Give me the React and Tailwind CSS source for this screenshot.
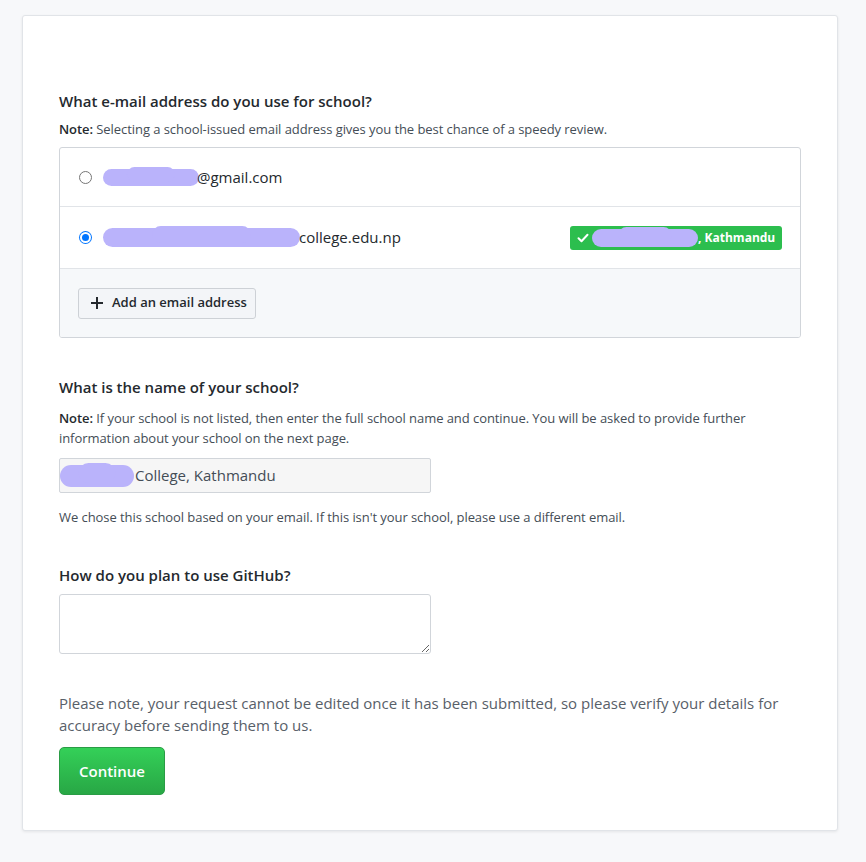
import React from "react";

function Blob({ w, h, className = "" }) {
  return (
    <svg width={w} height={h} viewBox={`0 0 ${w} ${h}`} className={className} aria-hidden="true">
      <rect x="0" y="2" width={w} height={h - 4} rx={(h - 4) / 2} fill="#bab3fb" />
      <rect x={w * 0.25} y="0" width={w * 0.5} height={h - 6} rx={(h - 6) / 2} fill="#bab3fb" />
    </svg>
  );
}

export default function App() {
  return (
    <div className="min-h-[862px] bg-[#f7f8fa] pt-[15px] pb-[31px] pl-[22px] text-[#24292e] [font-family:'Open_Sans',sans-serif]">
      <div className="w-[816px] bg-white border border-[#e1e4e8] rounded-[3px] shadow-[0_1px_3px_rgba(0,0,0,0.08)] px-9 pt-[75px] pb-9 h-[816px]">
        <h2 className="text-[15px] font-semibold leading-5">What e-mail address do you use for school?</h2>
        <p className="text-[13px] leading-5 mt-[8px] text-[#444d56] tracking-[-0.005em]">
          <span className="font-semibold text-[#24292e]">Note:</span> Selecting a school-issued email address gives you the best chance of a speedy review.
        </p>

        <div className="mt-[8px] border border-[#d1d5da] rounded-[3px] overflow-hidden">
          <div className="h-[59px] flex items-center pl-[19px] border-b border-[#e1e4e8]">
            <span className="w-[13px] h-[13px] rounded-full border border-[#767676] bg-white"></span>
            <span className="ml-[11px] flex items-center text-[15px] text-[#24292e]">
              <Blob w={96} h={21} />
              <span className="-ml-[2px]">@gmail.com</span>
            </span>
          </div>
          <div className="h-[62px] flex items-center pl-[19px] pr-[18px] border-b border-[#e1e4e8]">
            <span className="w-[13px] h-[13px] rounded-full bg-[#0075ff] flex items-center justify-center">
              <span className="w-[7px] h-[7px] rounded-full bg-[#0075ff] ring-2 ring-white"></span>
            </span>
            <span className="ml-[11px] flex items-center text-[15px] text-[#24292e]">
              <Blob w={197} h={23} />
              <span className="-ml-[1px]">college.edu.np</span>
            </span>
            <span className="ml-auto h-[24px] w-[212px] rounded-[3px] bg-[#2cbe4e] flex items-center pl-[6px] text-white text-[12px] font-bold">
              <svg width="14" height="14" viewBox="0 0 14 14" fill="none" aria-hidden="true">
                <path d="M2.5 7.3 5.5 10.2 11.5 3.8" stroke="white" strokeWidth="2" strokeLinecap="round" strokeLinejoin="round" />
              </svg>
              <Blob w={106} h={22} className="ml-[2px]" />
              <span>, Kathmandu</span>
            </span>
          </div>
          <div className="h-[68px] bg-[#f6f8fa] flex items-center pl-[18px]">
            <button className="h-[31px] w-[178px] flex items-center gap-[8px] pl-[11px] border border-[#cdd1d6] rounded-[3px] bg-[#f3f5f8] text-[13px] font-semibold text-[#24292e]">
              <svg width="14" height="14" viewBox="0 0 14 14" aria-hidden="true">
                <path d="M7 1v12M1 7h12" stroke="#24292e" strokeWidth="2" />
              </svg>
              Add an email address
            </button>
          </div>
        </div>

        <h2 className="mt-[39px] text-[15px] font-semibold leading-5">What is the name of your school?</h2>
        <p className="text-[13px] leading-5 mt-[11px] text-[#444d56] tracking-[-0.005em] max-w-[700px]">
          <span className="font-semibold text-[#24292e]">Note:</span> If your school is not listed, then enter the full school name and continue. You will be asked to provide further information about your school on the next page.
        </p>
        <div className="mt-[10px] w-[372px] h-[35px] border border-[#d1d5da] rounded-[2px] bg-[#f6f6f6] flex items-center text-[15px] text-[#444d56]">
          <Blob w={74} h={26} />
          <span className="ml-[1px]">College, Kathmandu</span>
        </div>
        <p className="mt-[14px] text-[13px] leading-5 text-[#444d56] tracking-[-0.005em]">We chose this school based on your email. If this isn't your school, please use a different email.</p>

        <h2 className="mt-[38px] text-[15px] font-semibold leading-5">How do you plan to use GitHub?</h2>
        <textarea className="block mt-[9px] w-[372px] h-[60px] border border-[#d1d5da] rounded-[3px] bg-white resize-y"></textarea>

        <p className="mt-[38px] text-[15px] leading-[22px] text-[#586069] max-w-[730px]">
          Please note, your request cannot be edited once it has been submitted, so please verify your details for accuracy before sending them to us.
        </p>
        <button className="mt-[11px] w-[106px] h-[48px] rounded-[5px] border border-[#2a9c45] bg-gradient-to-b from-[#34d058] to-[#28a745] text-white text-[15px] font-semibold">
          Continue
        </button>
      </div>
    </div>
  );
}
